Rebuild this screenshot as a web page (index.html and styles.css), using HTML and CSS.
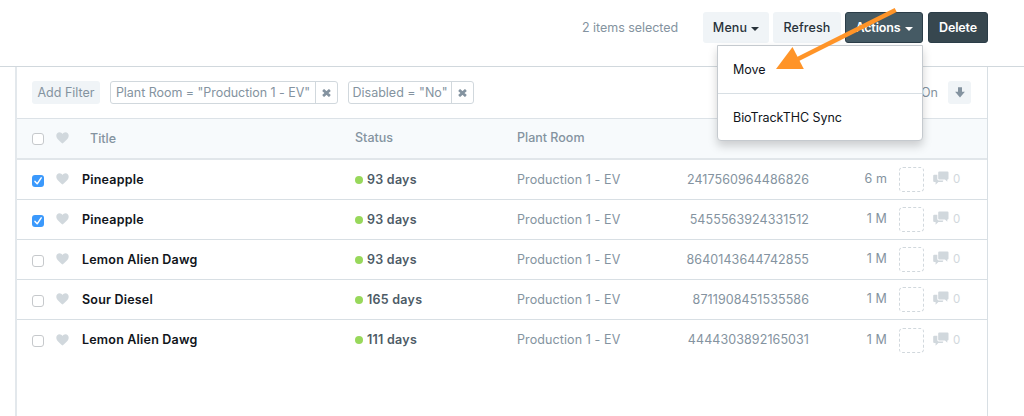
FILE: index.html
```html
<!DOCTYPE html>
<html lang="en">
<head>
<meta charset="utf-8">
<title>Plants</title>
<link rel="stylesheet" href="styles.css">
</head>
<body>
<svg class="defs" width="0" height="0">
  <symbol id="heart" viewBox="0 0 13 12"><path d="M6.5 11.6C5 10.1.3 7 .3 3.700.3 1.600 1.800.3 3.500.3c1.300 0 2.400.7 3 1.800.6-1.100 1.700-1.800 3-1.800 1.700 0 3.200 1.300 3.200 3.400C12.700 7 8 10.100 6.500 11.600z"/></symbol>
  <symbol id="check" viewBox="0 0 12 12"><path d="M3 6.400 5.200 8.800 9.200 2.900" fill="none" stroke="#fff" stroke-width="1.500" stroke-linecap="round" stroke-linejoin="round"/></symbol>
  <symbol id="cross" viewBox="0 0 9 8"><path d="M1.100 .9 7.900 7.100M7.900 .9 1.100 7.100" fill="none" stroke="currentColor" stroke-width="2.700"/></symbol>
  <symbol id="chat" viewBox="0 0 16 14"><path d="M6.200.5h8.300q1 0 1 1v6q0 1-1 1h-.2v2.300L12 8.500H6.200q-1 0-1-1v-6q0-1 1-1z"/><path d="M1.200 3.700H4.300V8q0 1.400 1.400 1.400h4.500v.6q0 1-1 1H5.300L2.600 13.700V11H1.200q-1 0-1-1V4.700q0-1 1-1z"/></symbol>
</svg>
<header class="head">
  <span class="selected">2 items selected</span>
  <button class="btn menu">Menu<i class="caret"></i></button>
  <button class="btn refresh">Refresh</button>
  <button class="btn actions">Actions<i class="caret"></i></button>
  <button class="btn delete">Delete</button>
</header>
<main class="list">
  <div class="filters">
    <button class="add">Add Filter</button>
    <div class="chip chip-room"><span>Plant Room = "Production 1 - EV"</span><b><svg width="9" height="8"><use href="#cross"/></svg></b></div>
    <div class="chip chip-disabled"><span>Disabled = "No"</span><b><svg width="9" height="8"><use href="#cross"/></svg></b></div>
    <span class="sort">Last Modified On</span>
    <button class="dir"><svg width="10" height="11" viewBox="0 0 10 11"><path d="M3 .3h4v4.500h2.900L5 10.500.1 4.800H3z"/></svg></button>
  </div>
  <div class="row titles">
    <i class="box"></i><svg class="heart"><use href="#heart"/></svg><span class="title">Title</span><span class="status">Status</span><span class="room">Plant Room</span>
  </div>
  <div class="row">
    <i class="box on"><svg><use href="#check"/></svg></i><svg class="heart"><use href="#heart"/></svg><span class="title">Pineapple</span><span class="status"><i class="dot"></i>93 days</span><span class="room">Production 1 - EV</span><span class="code">2417560964486826</span><span class="age">6 m</span><i class="avatar"></i><svg class="chat"><use href="#chat"/></svg><span class="count">0</span>
  </div>
  <div class="row">
    <i class="box on"><svg><use href="#check"/></svg></i><svg class="heart"><use href="#heart"/></svg><span class="title">Pineapple</span><span class="status"><i class="dot"></i>93 days</span><span class="room">Production 1 - EV</span><span class="code">5455563924331512</span><span class="age">1 M</span><i class="avatar"></i><svg class="chat"><use href="#chat"/></svg><span class="count">0</span>
  </div>
  <div class="row">
    <i class="box"></i><svg class="heart"><use href="#heart"/></svg><span class="title">Lemon Alien Dawg</span><span class="status"><i class="dot"></i>93 days</span><span class="room">Production 1 - EV</span><span class="code">8640143644742855</span><span class="age">1 M</span><i class="avatar"></i><svg class="chat"><use href="#chat"/></svg><span class="count">0</span>
  </div>
  <div class="row">
    <i class="box"></i><svg class="heart"><use href="#heart"/></svg><span class="title">Sour Diesel</span><span class="status"><i class="dot"></i>165 days</span><span class="room">Production 1 - EV</span><span class="code">8711908451535586</span><span class="age">1 M</span><i class="avatar"></i><svg class="chat"><use href="#chat"/></svg><span class="count">0</span>
  </div>
  <div class="row">
    <i class="box"></i><svg class="heart"><use href="#heart"/></svg><span class="title">Lemon Alien Dawg</span><span class="status"><i class="dot"></i>111 days</span><span class="room">Production 1 - EV</span><span class="code">4444303892165031</span><span class="age">1 M</span><i class="avatar"></i><svg class="chat"><use href="#chat"/></svg><span class="count">0</span>
  </div>
</main>
<div class="dropdown">
  <div class="item">Move</div>
  <div class="item">BioTrackTHC Sync</div>
</div>
<svg class="arrow" width="130" height="70" viewBox="770 5 130 70"><path d="M895.700 10 797 59.500" stroke="#ff9428" stroke-width="4.500" fill="none"/><path d="M776 69 792.500 47 803.800 69z" fill="#ff9428"/></svg>
</body>
</html>
```
FILE: styles.css
```css
* { box-sizing: border-box; }
body {
  margin: 0;
  height: 416px;
  overflow: hidden;
  position: relative;
  background: #fff;
  font: 12.5px/18px Inter, "Liberation Sans", sans-serif;
  color: #8493a0;
}
.defs { position: absolute; }
button { font: inherit; border: 0; padding: 0; }
.head {
  height: 67px;
  padding: 12px 36px 24px 0;
  border-bottom: 1px solid #d1d8dd;
  display: flex;
  justify-content: flex-end;
  align-items: center;
}
.selected { margin: 2px 25px 0 0; letter-spacing: -.05px; }
.btn {
  height: 31px;
  padding-top: 1px;
  border-radius: 3px;
  background: #f0f4f7;
  color: #28323b;
  font-weight: 450;
  letter-spacing: .12px;
  display: flex;
  align-items: center;
  justify-content: center;
}
.menu { width: 66px; margin-right: 4px; }
.refresh { width: 68px; margin-right: 4px; }
.actions, .delete { color: #fff; font-weight: 600; border: 1px solid #2b3d48; letter-spacing: -.12px; }
.actions { width: 78px; margin-right: 5px; background: #455a64; }
.delete { width: 60px; background: #37474f; }
.caret {
  border: 4px solid transparent;
  border-top-color: currentColor;
  border-bottom: 0;
  margin: 2px 0 0 4px;
}
.list {
  margin-left: 15px;
  width: 973px;
  height: 349px;
  border: solid #d8dfe4;
  border-width: 0 1px 0 2px;
  border-left-color: #e3e8ec;
}
.filters {
  height: 52px;
  padding: 0 15px;
  display: flex;
  align-items: center;
  border-bottom: 1px solid #dce2e7;
}
.add { width: 68px; height: 23px; border-radius: 3px; background: #f0f4f7; color: #8493a0; margin-right: 10px; }
.chip {
  height: 23px;
  border: 1px solid #d1d8dd;
  border-radius: 3px;
  display: flex;
  margin-right: 10px;
}
.chip span { flex: 1; text-align: center; line-height: 21px; white-space: nowrap; }
.chip b { width: 22px; border-left: 1px solid #d1d8dd; display: flex; align-items: center; justify-content: center; }
.chip-room { width: 228px; }
.chip-room span { letter-spacing: -.04px; }
.chip-disabled { width: 126px; }
.sort { margin-left: auto; }
.dir { width: 23px; height: 23px; margin: 0 1px 0 10px; border-radius: 3px; background: #f0f4f7; display: flex; align-items: center; justify-content: center; }
.dir svg { fill: #8493a0; }
.row {
  height: 40.1px;
  padding-left: 15px;
  border-bottom: 1px solid #d8dfe4;
  display: grid;
  grid-template: 1fr / 24px 26px 273px 162px 292px 78px 37px 9px 16px 4px 20px;
  align-items: center;
}
.row:last-child { border-bottom: 0; }
.box { width: 12px; height: 12px; border: 1px solid #c6c9cc; border-radius: 3px; background: #fff; margin-top: 2px; }
.box.on { border: 0; background: #3b99fc; }
.box svg { width: 12px; height: 12px; display: block; }
.heart { width: 13px; height: 12px; fill: #d1d8dd; margin-top: -1px; }
.title { font-weight: 600; color: #10141a; letter-spacing: .2px; }
.status { font-weight: 600; color: #4d5b66; letter-spacing: .25px; display: flex; align-items: center; }
.room { grid-column: 5; letter-spacing: .1px; }
.room, .code, .age, .avatar, .chat, .count { grid-row: 1; }
.titles { height: 41px; background: #f7fafc; border-bottom: 2px solid #e1e6ea; font-weight: 500; }
.titles span { color: inherit; font-weight: 500; letter-spacing: 0; margin-top: -1px; }
.titles .title { padding: 2px 0 0 8px; }
.titles .box { margin-top: 0; }
.dot { width: 8px; height: 8px; border-radius: 50%; background: #98d85b; margin-right: 4px; }
.code { grid-column: 5; justify-self: end; letter-spacing: .08px; }
.age { grid-column: 6; justify-self: end; margin-top: -1px; letter-spacing: .1px; }
.avatar { grid-column: 7; justify-self: end; width: 25px; height: 25px; border: 1px dashed #d1d8dd; border-radius: 4px; }
.chat { grid-column: 9; width: 16px; height: 14px; fill: #d1d8dd; margin-top: -3px; }
.count { grid-column: 11; color: #d1d8dd; font-size: 11.5px; margin-top: -1px; }
.dropdown {
  position: absolute;
  left: 717px;
  top: 45px;
  width: 206px;
  height: 96px;
  background: #fff;
  border: 1px solid #c5cacf;
  border-radius: 0 0 4px 4px;
  box-shadow: 0 5px 10px rgba(0,0,0,.18);
  color: #10141a;
}
.item { height: 47px; padding-left: 15px; line-height: 47px; letter-spacing: -.05px; }
.item + .item { border-top: 1px solid #d8dfe4; }
.arrow { position: absolute; left: 770px; top: 5px; }
```
